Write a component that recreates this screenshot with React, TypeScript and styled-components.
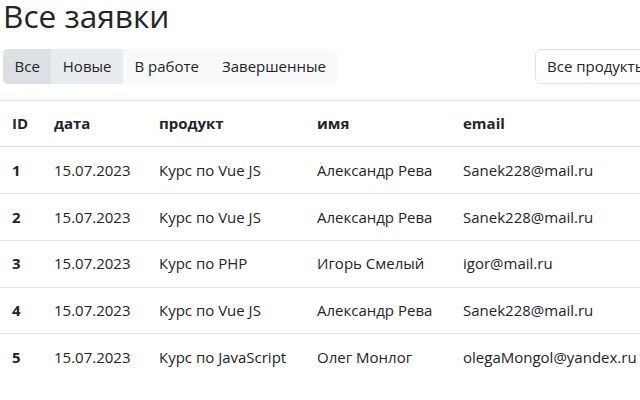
import React from "react";
import styled, { createGlobalStyle } from "styled-components";

const Global = createGlobalStyle`
  html, body { margin: 0; padding: 0; background: #fff; overflow: hidden; }
  body { font-family: "Open Sans", "Noto Sans", sans-serif; color: #212529; font-size: 15px; line-height: 1.5; }
  * { box-sizing: border-box; }
`;

const Page = styled.div`
  width: 760px;
  display: flex;
  flex-direction: column;
`;

const Title = styled.h1`
  margin: 0 0 0 3px;
  font-size: 31.6px;
  font-weight: 400;
  line-height: 31.6px;
  color: #212529;
`;

const Toolbar = styled.div`
  margin: 17.4px 3px 0 3px;
  display: flex;
  justify-content: space-between;
  align-items: center;
`;

const Group = styled.div`
  display: flex;
  border-radius: 5px;
  overflow: hidden;
  background: #f8f9fa;
`;

const TabButton = styled.button<{ $state?: "active" | "hover" | "none" }>`
  font-family: inherit;
  font-size: 15px;
  line-height: 22.5px;
  padding: 6.25px 11.5px;
  border: 0;
  color: #212529;
  background: ${(p) =>
    p.$state === "active" ? "#dce0e5" : p.$state === "hover" ? "#e9ecef" : "#f8f9fa"};
  cursor: pointer;
`;

const Select = styled.div`
  width: 222px;
  height: 35px;
  border: 1px solid #dee2e6;
  border-radius: 6px;
  padding: 0 11px;
  display: flex;
  align-items: center;
  font-size: 15px;
  color: #212529;
`;

const Table = styled.table`
  margin-top: 16px;
  width: 100%;
  border-collapse: collapse;
  table-layout: fixed;
  border-top: 1px solid #dee2e6;
`;

const Th = styled.th`
  text-align: left;
  font-weight: 700;
  padding: 11.5px 12px;
  line-height: 22.5px;
  border-bottom: 1px solid #d8dbdf;
  color: #212529;
`;

const Td = styled.td<{ $bold?: boolean; $last?: boolean }>`
  padding: 11.6px 12px;
  line-height: 22.5px;
  font-weight: ${(p) => (p.$bold ? 700 : 400)};
  border-bottom: ${(p) => (p.$last ? "0" : "1px solid #e5e7ea")};
  color: #212529;
  white-space: nowrap;
`;

const rows = [
  ["1", "15.07.2023", "Курс по Vue JS", "Александр Рева", "Sanek228@mail.ru"],
  ["2", "15.07.2023", "Курс по Vue JS", "Александр Рева", "Sanek228@mail.ru"],
  ["3", "15.07.2023", "Курс по PHP", "Игорь Смелый", "igor@mail.ru"],
  ["4", "15.07.2023", "Курс по Vue JS", "Александр Рева", "Sanek228@mail.ru"],
  ["5", "15.07.2023", "Курс по JavaScript", "Олег Монлог", "olegaMongol@yandex.ru"],
];

export default function App() {
  return (
    <>
      <Global />
      <Page>
        <Title>Все заявки</Title>
        <Toolbar>
          <Group>
            <TabButton $state="active">Все</TabButton>
            <TabButton $state="hover">Новые</TabButton>
            <TabButton>В работе</TabButton>
            <TabButton>Завершенные</TabButton>
          </Group>
          <Select>Все продукты</Select>
        </Toolbar>
        <Table>
          <colgroup>
            <col style={{ width: 42 }} />
            <col style={{ width: 105 }} />
            <col style={{ width: 158 }} />
            <col style={{ width: 146 }} />
            <col />
          </colgroup>
          <thead>
            <tr>
              <Th>ID</Th>
              <Th>дата</Th>
              <Th>продукт</Th>
              <Th>имя</Th>
              <Th>email</Th>
            </tr>
          </thead>
          <tbody>
            {rows.map((r, i) => (
              <tr key={r[0]}>
                {r.map((c, j) => (
                  <Td key={j} $bold={j === 0} $last={i === rows.length - 1}>
                    {c}
                  </Td>
                ))}
              </tr>
            ))}
          </tbody>
        </Table>
      </Page>
    </>
  );
}
